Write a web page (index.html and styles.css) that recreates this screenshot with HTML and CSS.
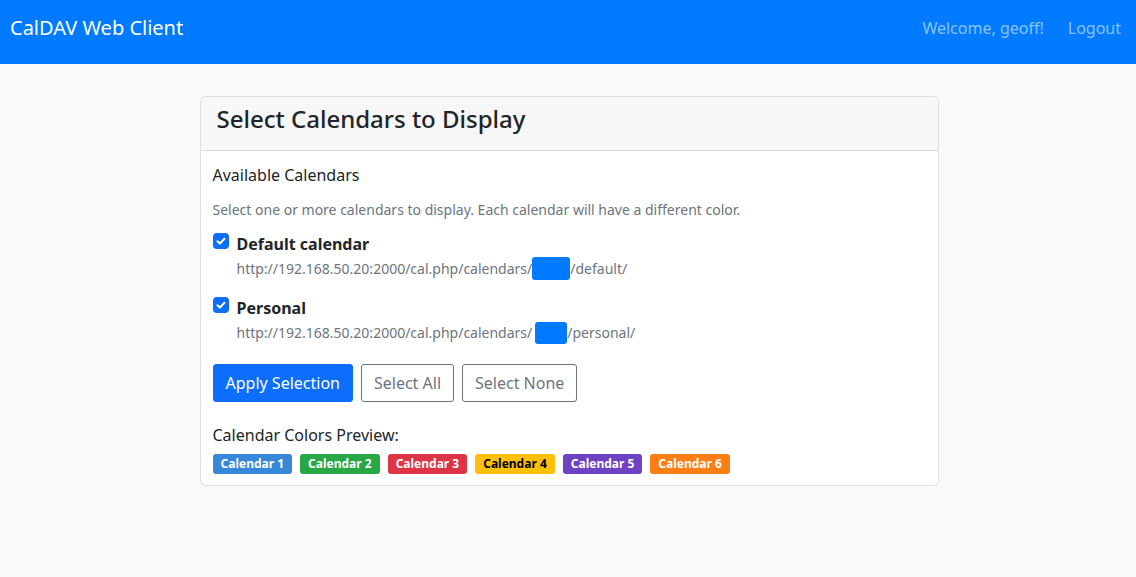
FILE: index.html
```html
<!DOCTYPE html>
<html lang="en">
<head>
<meta charset="utf-8">
<title>CalDAV Web Client</title>
<link rel="stylesheet" href="styles.css">
</head>
<body>
<nav class="navbar">
  <a class="brand" href="#">CalDAV Web Client</a>
  <div class="nav-right">
    <span class="nav-text">Welcome, geoff!</span>
    <a class="nav-link" href="#">Logout</a>
  </div>
</nav>
<main class="main">
  <section class="card">
    <header class="card-header">
      <h4 class="card-title">Select Calendars to Display</h4>
    </header>
    <div class="card-body">
      <h6 class="section-title">Available Calendars</h6>
      <p class="help">Select one or more calendars to display. Each calendar will have a different color.</p>
      <div class="check">
        <span class="checkbox"><svg viewBox="0 0 16 16" width="16" height="16"><path d="M4.5 8.2l2.3 2.3 4.7-4.7" fill="none" stroke="#fff" stroke-width="2" stroke-linecap="round" stroke-linejoin="round"/></svg></span>
        <div class="check-text">
          <div class="check-label">Default calendar</div>
          <div class="check-url">http://192.168.50.20:2000/cal.php/calendars/<span class="redact r1">geoff</span>/default/</div>
        </div>
      </div>
      <div class="check">
        <span class="checkbox"><svg viewBox="0 0 16 16" width="16" height="16"><path d="M4.5 8.2l2.3 2.3 4.7-4.7" fill="none" stroke="#fff" stroke-width="2" stroke-linecap="round" stroke-linejoin="round"/></svg></span>
        <div class="check-text">
          <div class="check-label">Personal</div>
          <div class="check-url">http://192.168.50.20:2000/cal.php/calendars/<span class="redact r2">geoff</span>/personal/</div>
        </div>
      </div>
      <div class="buttons">
        <button class="btn btn-primary">Apply Selection</button>
        <button class="btn btn-outline">Select All</button>
        <button class="btn btn-outline">Select None</button>
      </div>
      <h6 class="preview-title">Calendar Colors Preview:</h6>
      <div class="badges">
        <span class="badge c1">Calendar 1</span>
        <span class="badge c2">Calendar 2</span>
        <span class="badge c3">Calendar 3</span>
        <span class="badge c4">Calendar 4</span>
        <span class="badge c5">Calendar 5</span>
        <span class="badge c6">Calendar 6</span>
      </div>
    </div>
  </section>
</main>
</body>
</html>
```

FILE: styles.css
```css
* { box-sizing: border-box; }
html, body { margin: 0; padding: 0; }
body {
  font-family: "Noto Sans", "Liberation Sans", sans-serif;
  font-size: 16px;
  line-height: 1.5;
  color: #212529;
  background: #f8f9fa;
  width: 1136px;
  height: 577px;
  overflow: hidden;
}
.navbar {
  height: 64px;
  background: #007bff;
  display: flex;
  justify-content: space-between;
  align-items: flex-start;
  padding: 13px 15px 0 10px;
}
.brand {
  color: #fff;
  text-decoration: none;
  font-size: 20px;
  line-height: 30px;
}
.nav-right {
  display: flex;
  gap: 24px;
  line-height: 30px;
  font-size: 16px;
}
.nav-text, .nav-link {
  color: rgba(255, 255, 255, 0.55);
  text-decoration: none;
}
.main {
  padding-top: 32px;
  display: flex;
  justify-content: center;
}
.card {
  width: 739px;
  margin-left: 2px;
  background: #fff;
  border: 1px solid rgba(0, 0, 0, 0.125);
  border-radius: 6px;
  overflow: hidden;
}
.card-header {
  background: #f7f7f7;
  border-bottom: 1px solid rgba(0, 0, 0, 0.125);
  padding: 8px 16px;
}
.card-title {
  margin: 0 0 8px;
  font-size: 24px;
  font-weight: 500;
  line-height: 28.8px;
}
.card-body {
  padding: 12px 12px 11px;
}
.section-title {
  margin: 0 0 12px;
  font-size: 16px;
  font-weight: 400;
  line-height: 24px;
}
.help {
  margin: 0 0 12px;
  font-size: 14px;
  line-height: 21px;
  color: #6c757d;
}
.check {
  display: flex;
  gap: 8px;
  margin-bottom: 16px;
}
.checkbox {
  flex: none;
  width: 16px;
  height: 16px;
  margin-top: 1px;
  background: #0d6efd;
  border-radius: 4px;
  display: flex;
}
.check-label {
  font-weight: 700;
  line-height: 24px;
}
.check-url {
  font-size: 14px;
  line-height: 21px;
  color: #6c757d;
  margin-top: 2px;
}
.redact {
  display: inline-block;
  background: #007bff;
  color: transparent;
  border-radius: 3px;
  vertical-align: middle;
}
.r1 { width: 38px; height: 23px; margin-top: -3px; }
.r2 { width: 32px; height: 22px; margin-left: 3px; margin-top: -3px; }
.buttons {
  display: flex;
  gap: 8px;
  margin-top: 20px;
}
.btn {
  font-family: inherit;
  font-size: 16px;
  line-height: 24px;
  padding: 6px 12px;
  border-radius: 3px;
  border: 1px solid transparent;
  background: transparent;
}
.btn-primary {
  background: #0d6efd;
  border-color: #0d6efd;
  color: #fff;
}
.btn-outline {
  border-color: #6c757d;
  color: #6c757d;
}
.preview-title {
  margin: 21px 0 7px;
  font-size: 16px;
  font-weight: 400;
  line-height: 24px;
}
.badges {
  display: flex;
  gap: 8px;
}
.badge {
  display: inline-block;
  height: 20px;
  padding: 0 8px;
  font-size: 12px;
  font-weight: 700;
  line-height: 20px;
  color: #fff;
  border-radius: 3px;
}
.c1 { background: #3788d8; }
.c2 { background: #28a745; }
.c3 { background: #dc3545; }
.c4 { background: #ffc107; color: #000; }
.c5 { background: #6f42c1; }
.c6 { background: #fd7e14; }
```
